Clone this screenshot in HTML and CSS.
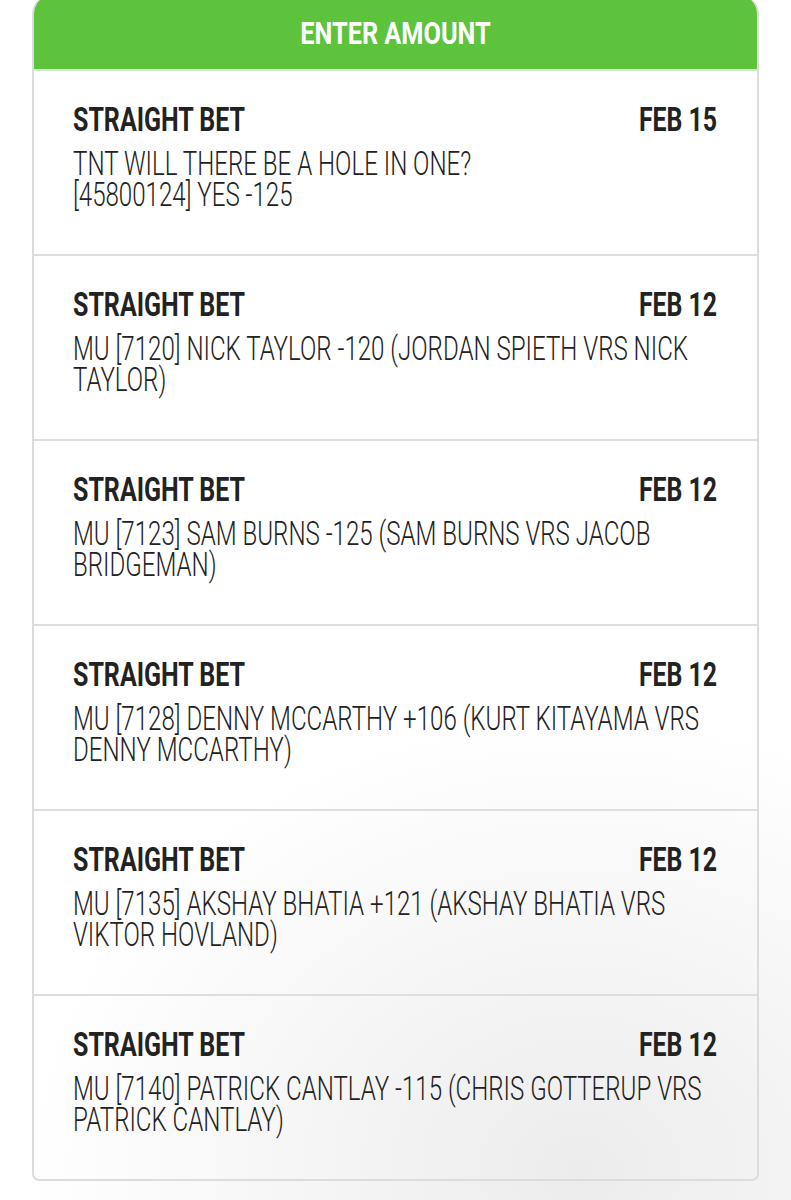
FILE: index.html
```html
<!DOCTYPE html>
<html>
<head>
<meta charset="utf-8">
<link rel="stylesheet" href="styles.css">
</head>
<body>
<div class="card">
  <div class="card-head"><span class="head-text">ENTER AMOUNT</span></div>
  <div class="bet">
    <div class="bet-top"><span class="bet-type">STRAIGHT BET</span><span class="bet-date">FEB 15</span></div>
    <div class="bet-desc">TNT WILL THERE BE A HOLE IN ONE?<br>[45800124] YES -125</div>
  </div>
  <div class="bet">
    <div class="bet-top"><span class="bet-type">STRAIGHT BET</span><span class="bet-date">FEB 12</span></div>
    <div class="bet-desc">MU [7120] NICK TAYLOR -120 (JORDAN SPIETH VRS NICK TAYLOR)</div>
  </div>
  <div class="bet">
    <div class="bet-top"><span class="bet-type">STRAIGHT BET</span><span class="bet-date">FEB 12</span></div>
    <div class="bet-desc">MU [7123] SAM BURNS -125 (SAM BURNS VRS JACOB BRIDGEMAN)</div>
  </div>
  <div class="bet">
    <div class="bet-top"><span class="bet-type">STRAIGHT BET</span><span class="bet-date">FEB 12</span></div>
    <div class="bet-desc">MU [7128] DENNY MCCARTHY +106 (KURT KITAYAMA VRS DENNY MCCARTHY)</div>
  </div>
  <div class="bet">
    <div class="bet-top"><span class="bet-type">STRAIGHT BET</span><span class="bet-date">FEB 12</span></div>
    <div class="bet-desc">MU [7135] AKSHAY BHATIA +121 (AKSHAY BHATIA VRS VIKTOR HOVLAND)</div>
  </div>
  <div class="bet bet-last">
    <div class="bet-top"><span class="bet-type">STRAIGHT BET</span><span class="bet-date">FEB 12</span></div>
    <div class="bet-desc">MU [7140] PATRICK CANTLAY -115 (CHRIS GOTTERUP VRS PATRICK CANTLAY)</div>
  </div>
</div>
</body>
</html>
```

FILE: styles.css
```css
html, body {
  margin: 0;
  padding: 0;
}
body {
  width: 791px;
  height: 1200px;
  overflow: hidden;
  font-family: Roboto, "Liberation Sans", Arial, sans-serif;
  background:
    radial-gradient(ellipse 560px 460px at 580px 1170px, rgba(0,0,0,0.075), rgba(0,0,0,0) 100%),
    #ffffff;
}
.card {
  margin: -4px 0 0 32px;
  width: 727px;
  box-sizing: border-box;
  border: 2px solid #dcdcdc;
  border-top: 0;
  border-radius: 18px 18px 7px 7px;
  overflow: hidden;
}
.card-head {
  height: 75px;
  box-sizing: border-box;
  background: #5dc23c;
  border-bottom: 2px solid #d4ebca;
  margin: 0 -2px;
  text-align: center;
  padding-top: 21px;
}
.head-text {
  display: inline-block;
  color: #ffffff;
  font-weight: 700;
  font-size: 32px;
  line-height: 32px;
  transform: scaleX(0.79);
  transform-origin: center top;
}
.bet {
  height: 185px;
  box-sizing: border-box;
  padding: 32px 40px 0 39px;
  border-bottom: 2px solid #dedede;
}
.bet-last {
  border-bottom: 0;
  height: 183px;
}
.bet-top {
  display: flex;
  justify-content: space-between;
  font-weight: 700;
  font-size: 34px;
  line-height: 32px;
  color: #222222;
}
.bet-type {
  display: inline-block;
  transform: scaleX(0.735);
  transform-origin: left top;
}
.bet-date {
  display: inline-block;
  transform: scaleX(0.73);
  transform-origin: right top;
}
.bet-desc {
  margin-top: 14px;
  width: 882px;
  font-weight: 300;
  font-size: 33px;
  line-height: 30.5px;
  color: #222222;
  transform: scaleX(0.73);
  transform-origin: left top;
}
```
